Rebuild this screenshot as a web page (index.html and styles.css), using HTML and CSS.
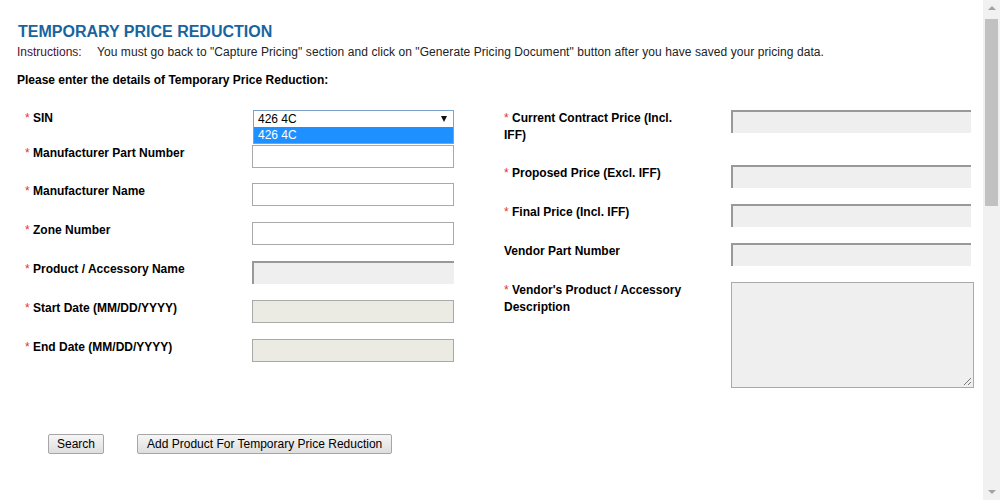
FILE: index.html
```html
<!DOCTYPE html>
<html>
<head>
<meta charset="utf-8">
<title>Temporary Price Reduction</title>
<link rel="stylesheet" href="styles.css">
</head>
<body>
<div class="page">
  <h1 class="title">TEMPORARY PRICE REDUCTION</h1>
  <p class="instructions"><span class="instr-label">Instructions:</span><span class="instr-text">You must go back to "Capture Pricing" section and click on "Generate Pricing Document" button after you have saved your pricing data.</span></p>
  <p class="intro">Please enter the details of Temporary Price Reduction:</p>

  <div class="form">
    <div class="col col-left">
      <div class="row row-sin">
        <label class="label"><span class="req">*</span>&nbsp;SIN</label>
        <div class="select">
          <span class="select-value">426 4C</span>
          <span class="select-arrow"></span>
          <div class="select-list">
            <div class="option selected">426 4C</div>
          </div>
        </div>
      </div>
      <div class="row row-mpn">
        <label class="label"><span class="req">*</span>&nbsp;Manufacturer Part Number</label>
        <div class="input input-left"></div>
      </div>
      <div class="row">
        <label class="label"><span class="req">*</span>&nbsp;Manufacturer Name</label>
        <div class="input input-left"></div>
      </div>
      <div class="row">
        <label class="label"><span class="req">*</span>&nbsp;Zone Number</label>
        <div class="input input-left"></div>
      </div>
      <div class="row">
        <label class="label"><span class="req">*</span>&nbsp;Product / Accessory Name</label>
        <div class="input input-left readonly"></div>
      </div>
      <div class="row">
        <label class="label"><span class="req">*</span>&nbsp;Start Date (MM/DD/YYYY)</label>
        <div class="input input-left disabled"></div>
      </div>
      <div class="row">
        <label class="label"><span class="req">*</span>&nbsp;End Date (MM/DD/YYYY)</label>
        <div class="input input-left disabled"></div>
      </div>
    </div>

    <div class="col col-right">
      <div class="row row-tall">
        <label class="label"><span class="req">*</span>&nbsp;Current Contract Price (Incl. IFF)</label>
        <div class="input input-right readonly"></div>
      </div>
      <div class="row">
        <label class="label"><span class="req">*</span>&nbsp;Proposed Price (Excl. IFF)</label>
        <div class="input input-right readonly"></div>
      </div>
      <div class="row">
        <label class="label"><span class="req">*</span>&nbsp;Final Price (Incl. IFF)</label>
        <div class="input input-right readonly"></div>
      </div>
      <div class="row">
        <label class="label">Vendor Part Number</label>
        <div class="input input-right readonly"></div>
      </div>
      <div class="row row-area">
        <label class="label"><span class="req">*</span>&nbsp;Vendor's Product / Accessory Description</label>
        <div class="textarea">
          <svg class="grip" width="9" height="9" viewBox="0 0 9 9"><path d="M8 1L1 8M8 5L5 8" stroke="#777" stroke-width="1" fill="none"/></svg>
        </div>
      </div>
    </div>
  </div>

  <div class="actions">
    <button class="btn" type="button">Search</button>
    <button class="btn" type="button">Add Product For Temporary Price Reduction</button>
  </div>
</div>

<div class="scrollbar">
  <div class="sb-arrow sb-up"></div>
  <div class="sb-thumb"></div>
  <div class="sb-arrow sb-down"></div>
</div>
</body>
</html>
```
FILE: styles.css
```css
html, body {
  margin: 0;
  padding: 0;
  background: #fff;
  overflow: hidden;
}
body {
  font-family: "Liberation Sans", Arial, sans-serif;
  font-size: 12px;
  color: #000;
}
.page {
  padding: 23px 0 0 17px;
  width: 966px;
}
.title {
  margin: 0;
  padding-left: 1px;
  font-size: 16px;
  line-height: 18px;
  font-weight: bold;
  color: #17659f;
}
.instructions {
  margin: 4px 0 0 0;
  line-height: 14px;
  color: #222;
}
.instr-label {
  color: #4a1030;
  display: inline-block;
  width: 80px;
}
.instr-text {
  letter-spacing: 0.07px;
}
.intro {
  margin: 14px 0 0 0;
  line-height: 14px;
  font-weight: bold;
}
.form {
  display: flex;
  margin-top: 23px;
  margin-left: 8px;
  gap: 50px;
  height: 278px;
}
.col {
  display: flex;
  flex-direction: column;
}
.col-left { width: 429px; }
.col-right { width: 470px; }
.row {
  display: flex;
  align-items: flex-start;
  height: 39px;
}
.row-sin { height: 35px; }
.row-mpn { height: 38px; }
.row-tall { height: 55px; }
.row-area { height: auto; }
.label {
  flex: 0 0 185px;
  margin-right: 42px;
  line-height: 17px;
  font-weight: bold;
  color: #000;
}
.req {
  color: #e8312f;
  font-weight: normal;
}
.input {
  box-sizing: border-box;
  height: 23px;
  background: #fff;
  border: 1px solid #a9a9a9;
}
.input-left { width: 202px; }
.input-right { width: 240px; }
.input.readonly {
  background: #efefef;
  border: none;
  border-top: 2px solid #999;
  border-left: 2px solid #999;
}
.input.disabled {
  background: #ebebe4;
  border: 1px solid #a9a9a9;
}
.select {
  position: relative;
  box-sizing: border-box;
  width: 201px;
  height: 18px;
  margin-left: 1px;
  border: 1px solid #7da2ce;
  background: #fff;
  display: flex;
  align-items: center;
  justify-content: space-between;
  padding: 0 6px 0 4px;
  line-height: 14px;
}
.select-value {
  font-size: 12px;
}
.select-arrow {
  width: 0;
  height: 0;
  border-left: 3.5px solid transparent;
  border-right: 3.5px solid transparent;
  border-top: 6px solid #111;
}
.select-list {
  position: absolute;
  left: -1px;
  top: 16px;
  width: 201px;
  box-sizing: border-box;
  border: 1px solid #7da2ce;
  border-top: none;
  background: #fff;
}
.option {
  height: 16px;
  line-height: 16px;
  padding-left: 4px;
}
.option.selected {
  background: #1e90ff;
  color: #fff;
}
.textarea {
  position: relative;
  box-sizing: border-box;
  width: 243px;
  height: 106px;
  background: #efefef;
  border: 1px solid #a9a9a9;
}
.grip {
  position: absolute;
  right: 1px;
  bottom: 1px;
}
.actions {
  display: flex;
  gap: 33px;
  margin-top: 46px;
  margin-left: 31px;
}
.btn {
  box-sizing: border-box;
  height: 20px;
  padding: 0 8px;
  font-family: "Liberation Sans", Arial, sans-serif;
  font-size: 12px;
  color: #000;
  border: 1px solid #a6a6a6;
  border-radius: 2px;
  background: linear-gradient(#f6f6f6, #dedede);
  line-height: 18px;
}
.btn + .btn {
  padding: 0 9px;
}
.scrollbar {
  position: fixed;
  top: 0;
  right: 0;
  width: 17px;
  height: 500px;
  background: #f1f1f1;
}
.sb-thumb {
  position: absolute;
  left: 2px;
  top: 19px;
  width: 13px;
  height: 187px;
  background: #c1c1c1;
}
.sb-arrow {
  position: absolute;
  left: 5px;
  width: 0;
  height: 0;
  border-left: 4px solid transparent;
  border-right: 4px solid transparent;
}
.sb-up {
  top: 6px;
  border-bottom: 4px solid #a3a3a3;
}
.sb-down {
  bottom: 6px;
  border-top: 4px solid #a3a3a3;
}
```
